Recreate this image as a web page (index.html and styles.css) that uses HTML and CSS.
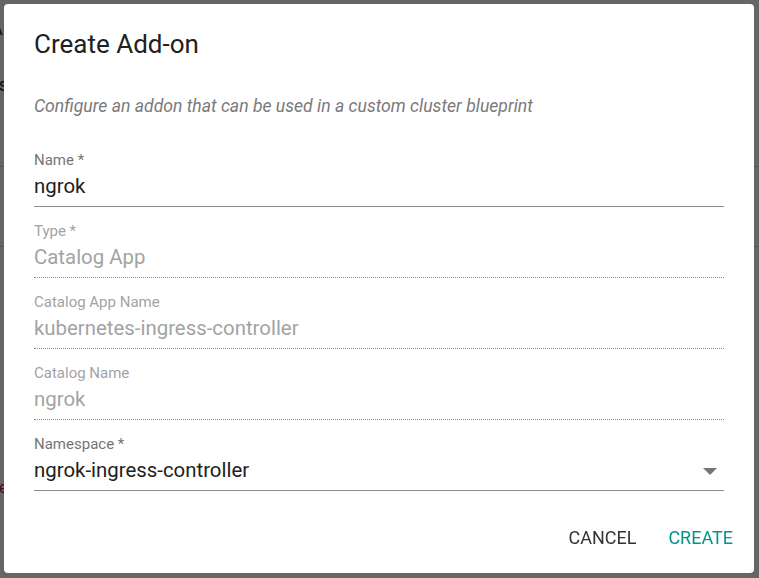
FILE: index.html
```html
<!DOCTYPE html>
<html>
<head>
<meta charset="utf-8">
<title>Create Add-on</title>
<link rel="stylesheet" href="styles.css">
</head>
<body>
<div class="page">
  <div class="pg-line pg-a">Al</div>
  <div class="pg-line pg-b">Ts</div>
  <div class="pg-rule pg-r1"></div>
  <div class="pg-rule pg-r2"></div>
  <div class="pg-line pg-c">de</div>
</div>
<div class="backdrop">
  <div class="dialog" role="dialog">
    <h2 class="title">Create Add-on</h2>
    <p class="subtitle">Configure an addon that can be used in a custom cluster blueprint</p>
    <div class="field">
      <label class="label">Name *</label>
      <div class="input">ngrok</div>
    </div>
    <div class="field disabled">
      <label class="label">Type *</label>
      <div class="input">Catalog App</div>
    </div>
    <div class="field disabled">
      <label class="label">Catalog App Name</label>
      <div class="input">kubernetes-ingress-controller</div>
    </div>
    <div class="field disabled">
      <label class="label">Catalog Name</label>
      <div class="input">ngrok</div>
    </div>
    <div class="field select">
      <label class="label">Namespace *</label>
      <div class="input"><span>ngrok-ingress-controller</span>
        <svg class="arrow" width="14" height="7" viewBox="0 0 14 7"><path d="M0 0 L14 0 L7 7 Z" fill="#757575"/></svg>
      </div>
    </div>
    <div class="actions">
      <button class="btn">CANCEL</button>
      <button class="btn primary">CREATE</button>
    </div>
  </div>
</div>
</body>
</html>
```
FILE: styles.css
```css
* { box-sizing: border-box; }
html, body { margin: 0; padding: 0; }
body {
  width: 759px;
  height: 578px;
  overflow: hidden;
  background: #fff;
  font-family: Roboto, "Liberation Sans", sans-serif;
}
.page {
  padding-top: 18px;
}
.pg-line {
  font-size: 18px;
  line-height: 22px;
  color: #222;
  margin-left: -9px;
}
.pg-b { margin-top: 34px; margin-left: -11px; }
.pg-rule { height: 1px; background: #ccc; }
.pg-r1 { margin-top: 70px; }
.pg-r2 { margin-top: 79px; }
.pg-c { margin-top: 230px; color: #b0174a; font-size: 16px; margin-left: -10px; }

.backdrop {
  position: fixed;
  inset: 0;
  background: rgba(0, 0, 0, 0.6);
  padding: 4px 5px 5px 4px;
}
.dialog {
  width: 750px;
  height: 569px;
  background: #fff;
  border-radius: 4px;
  padding: 24px 0 0 30px;
  display: flex;
  flex-direction: column;
}
.title {
  margin: 0;
  font-size: 26px;
  line-height: 32px;
  font-weight: 400;
  color: #212121;
}
.subtitle {
  margin: 34px 0 0;
  font-size: 17.6px;
  line-height: 24px;
  font-style: italic;
  color: #7a7a7a;
}
.field {
  width: 690px;
  margin-top: 15px;
  border-bottom: 1px solid #8c8c8c;
  padding-bottom: 6px;
}
.subtitle + .field { margin-top: 33px; }
.label {
  display: block;
  font-size: 15px;
  line-height: 18px;
  color: #757575;
}
.input {
  margin-top: 3px;
  font-size: 20.4px;
  line-height: 28px;
  color: #212121;
  display: flex;
  align-items: center;
  justify-content: space-between;
}
.disabled { border-bottom: 1px dotted #8c8c8c; }
.disabled .label { color: #a3a3a3; }
.disabled .input { color: #a3a3a3; }
.arrow { margin-right: 7px; margin-top: 2px; }
.actions {
  margin-top: 27px;
  display: flex;
  justify-content: flex-end;
  gap: 10px;
  padding-right: 10px;
}
.btn {
  font-family: Roboto, "Liberation Sans", sans-serif;
  font-size: 18px;
  line-height: 24px;
  padding: 8px 11px;
  border: 0;
  background: none;
  color: #333;
  border-radius: 4px;
}
.btn.primary { color: #009688; }
```
